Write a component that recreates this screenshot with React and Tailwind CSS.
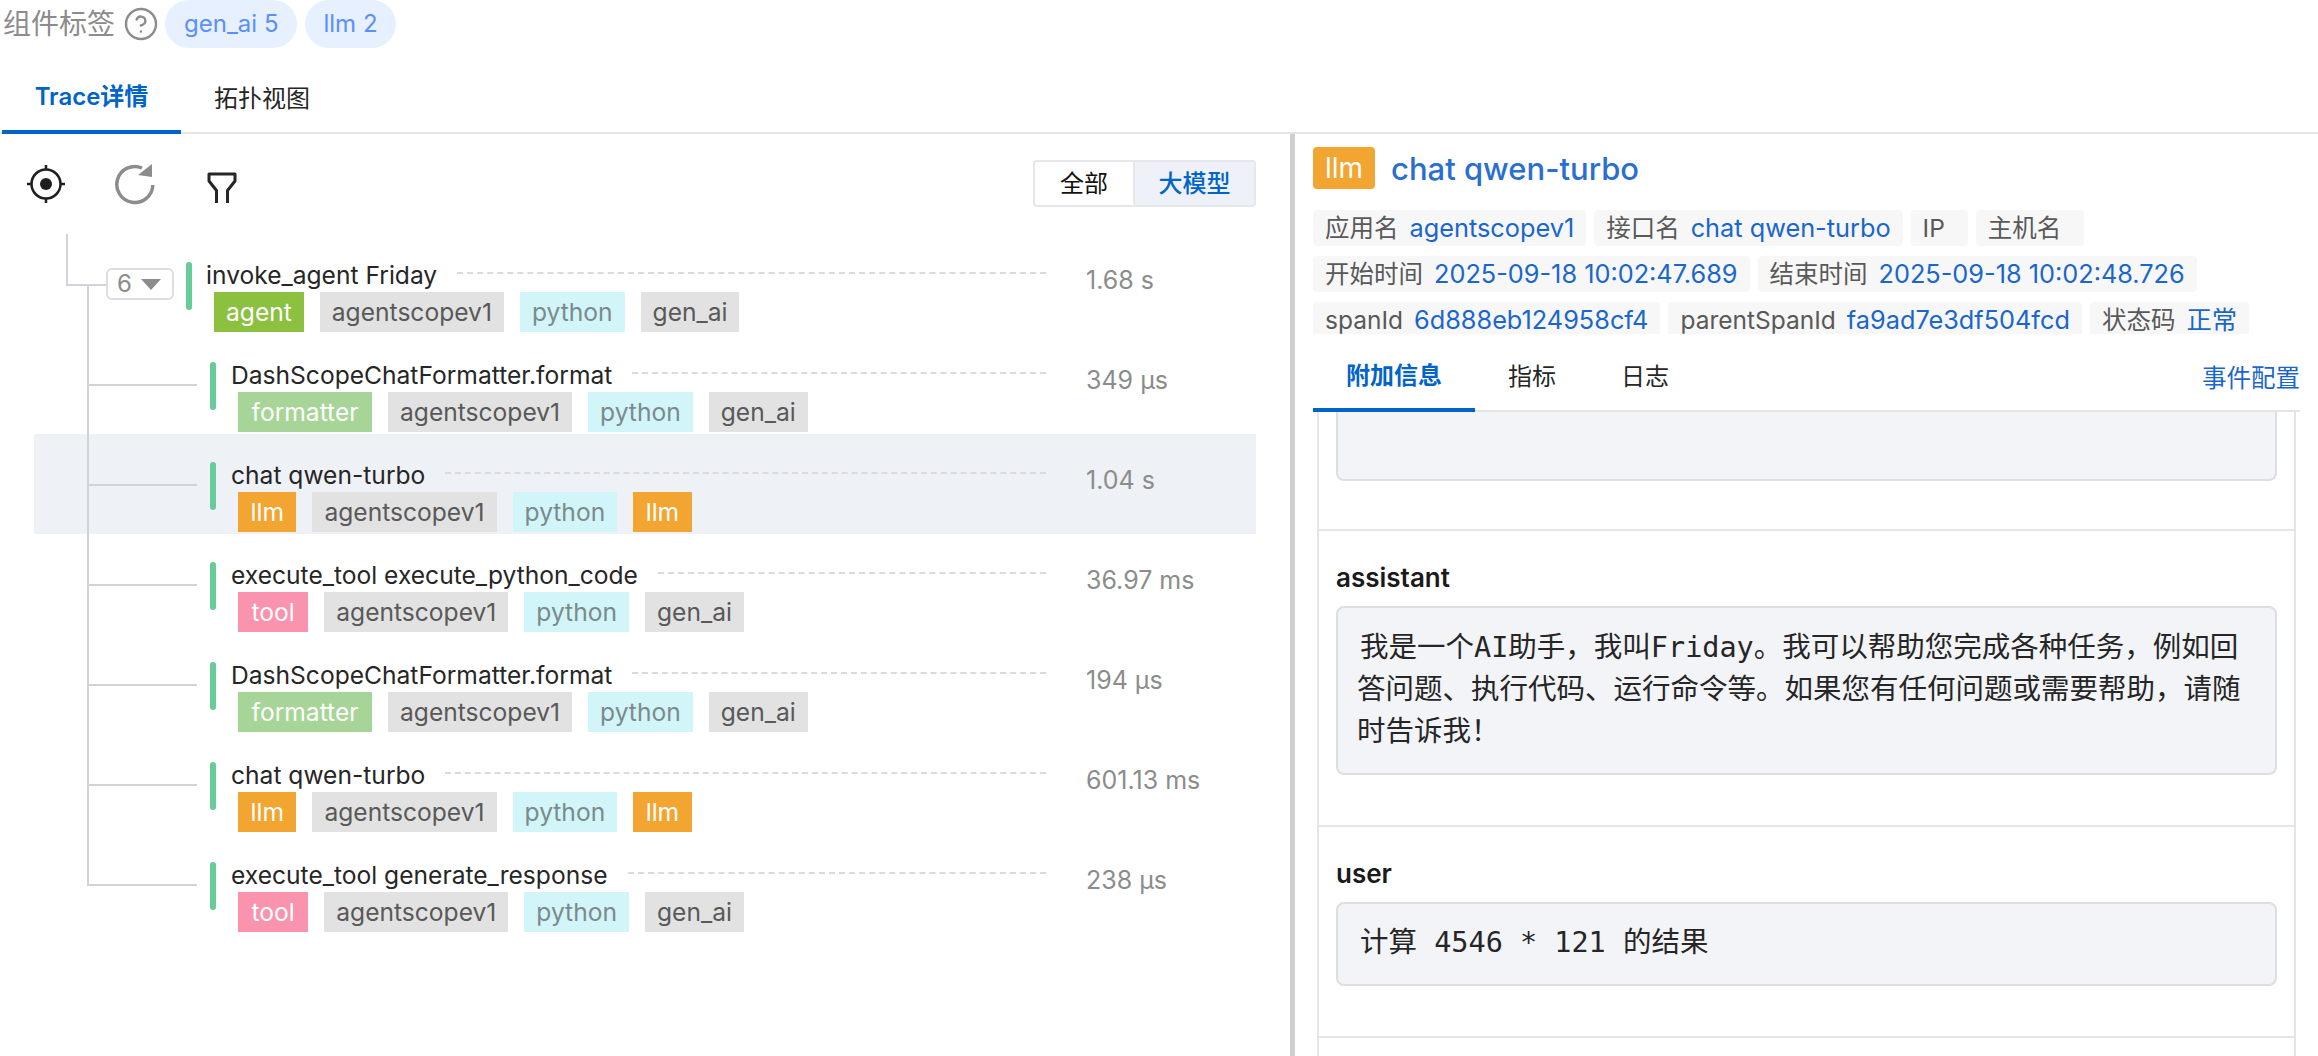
import React from "react";
import { CircleHelp } from "lucide-react";

const sans = 'font-["Inter","Noto_Sans_CJK_SC",sans-serif]';

const TAG = {
  agent: "px-3 bg-[#8cc03f] text-white",
  llm: "px-[12.5px] bg-[#f2a531] text-white",
  tool: "px-[13.5px] bg-[#fa94ae] text-white",
  formatter: "px-[13.5px] bg-[#a7d597] text-white",
  agentscopev1: "px-3 bg-[#e2e2e2] text-[#595959]",
  python: "px-3 bg-[#d2f5f9] text-[#7b8a8c]",
  gen_ai: "px-3 bg-[#e2e2e2] text-[#595959]",
};

function Tag({ name }) {
  return <span className={`h-10 flex items-center text-[24.6px] leading-none ${TAG[name]}`}>{name}</span>;
}

const rows = [
  { title: "invoke_agent Friday", time: "1.68 s", tags: ["agent", "agentscopev1", "python", "gen_ai"], root: true },
  { title: "DashScopeChatFormatter.format", time: "349 µs", tags: ["formatter", "agentscopev1", "python", "gen_ai"] },
  { title: "chat qwen-turbo", time: "1.04 s", tags: ["llm", "agentscopev1", "python", "llm"], active: true },
  { title: "execute_tool execute_python_code", time: "36.97 ms", tags: ["tool", "agentscopev1", "python", "gen_ai"] },
  { title: "DashScopeChatFormatter.format", time: "194 µs", tags: ["formatter", "agentscopev1", "python", "gen_ai"] },
  { title: "chat qwen-turbo", time: "601.13 ms", tags: ["llm", "agentscopev1", "python", "llm"] },
  { title: "execute_tool generate_response", time: "238 µs", tags: ["tool", "agentscopev1", "python", "gen_ai"], last: true },
];

function Row({ r }) {
  return (
    <div className={`relative flex h-[100px] ${r.root ? "pl-[152px]" : "pl-[176px]"} ${r.active ? "bg-[#eef1f6]" : ""}`}>
      {r.root ? (
        <>
          <div className="absolute left-[32px] top-0 h-[52px] w-[40px] border-l-2 border-b-2 border-[#d0d3d9]" />
          <div className="absolute left-[53px] top-[51px] bottom-0 w-[2px] bg-[#d0d3d9]" />
          <div className="absolute left-[72px] top-[34px] w-[68px] h-[32px] bg-white border-2 border-[#dcdee2] rounded-[6px] flex items-center pl-[9px] gap-[9px] text-[24px] leading-none text-[#8c8c8c]">
            6
            <svg width="20" height="11" viewBox="0 0 20 11"><path d="M0 0H20L10 11Z" fill="#8c8c8c" /></svg>
          </div>
        </>
      ) : (
        <>
          <div className="absolute left-[53px] top-0 h-[52px] w-[110px] border-l-2 border-b-2 border-[#d0d3d9]" />
          {!r.last && <div className="absolute left-[53px] top-[51px] bottom-0 w-[2px] bg-[#d0d3d9]" />}
        </>
      )}
      <div className="w-[6px] h-[48px] mt-[28px] rounded-full bg-[#66cc99] shrink-0" />
      <div className={`flex-1 min-w-0 ${r.root ? "ml-[14px]" : "ml-[15px]"} pt-[24px]`}>
        <div className="flex items-center h-[34px]">
          <span className="text-[24.6px] leading-none text-[#262626] whitespace-nowrap">{r.title}</span>
          <div className="flex-1 ml-[20px] mb-[4px] border-t-2 border-dashed border-[#d9dbe0]" />
        </div>
        <div className={`flex gap-4 ${r.root ? "ml-[8px]" : "ml-[7px]"}`}>
          {r.tags.map((t, i) => <Tag key={i} name={t} />)}
        </div>
      </div>
      <div className="w-[170px] ml-[40px] shrink-0 pt-[31px] text-[25px] leading-[30px] text-[#8c8c8c]">{r.time}</div>
    </div>
  );
}

function Chip({ k, v }) {
  return (
    <span className="h-[36px] px-3 flex items-center gap-[11px] rounded-[4px] bg-[#f7f7f7] text-[24.5px] leading-none text-[#595959] whitespace-nowrap">
      {k}
      <span className="text-[25.3px] text-[#1a66cc]">{v}</span>
    </span>
  );
}

const monoCls = 'font-["DejaVu_Sans_Mono","Noto_Sans_CJK_SC",monospace] text-[28.5px] leading-[42px] text-[#262626]';

export default function App() {
  return (
    <div className={`w-[2318px] h-[1056px] overflow-hidden bg-white flex flex-col ${sans}`}>
      <div className="h-[48px] shrink-0 flex items-center pl-[3px]">
        <span className="text-[28px] leading-none text-[#8c8c8c]">组件标签</span>
        <CircleHelp className="ml-[8px] text-[#8c8c8c]" size={36} strokeWidth={1.6} />
        <span className="ml-[6px] h-[48px] px-[19px] rounded-full bg-[#e6f0ff] text-[#5b8ff9] text-[24px] flex items-center">gen_ai 5</span>
        <span className="ml-[8px] h-[48px] px-[18px] rounded-full bg-[#e6f0ff] text-[#5b8ff9] text-[24px] flex items-center">llm 2</span>
      </div>

      <div className="h-[86px] shrink-0 flex border-b-2 border-[#e5e5e5] pl-[2px] text-[24px]">
        <div className="w-[179px] h-[86px] border-b-4 border-[#0064c8] flex items-center justify-center pt-[16px] font-semibold text-[#0064c8]">Trace详情</div>
        <div className="ml-[33px] h-[86px] flex items-center pt-[16px] text-[#262626]">拓扑视图</div>
      </div>

      <div className="flex-1 min-h-0 flex">
        <div className="w-[1290px] shrink-0 flex flex-col">
          <div className="h-[100px] shrink-0 flex items-start pl-[27px] pr-[34px]">
            <svg className="mt-[31px]" width="38" height="38" viewBox="0 0 38 38" fill="none" stroke="#1f1f1f">
              <circle cx="19" cy="19" r="14.5" strokeWidth="2.5" />
              <circle cx="19" cy="19" r="6" fill="#1f1f1f" stroke="none" />
              <path d="M19 0V5M19 33V38M0 19H5M33 19H38" strokeWidth="2.5" />
            </svg>
            <svg className="ml-[49px] mt-[29px]" width="42" height="42" viewBox="0 0 42 42" fill="none">
              <path d="M28 5A18 18 0 1 0 38.8 22" stroke="#8c8c8c" strokeWidth="3.5" />
              <path d="M38 1V14L24 12Z" fill="#8c8c8c" />
            </svg>
            <svg className="ml-[51px] mt-[38px]" width="30" height="32" viewBox="0 0 30 32" fill="none" stroke="#262626" strokeWidth="3" strokeLinejoin="round">
              <path d="M9.5 31V18.5L2 9V2H28V9L20.5 18.5V31" />
            </svg>
            <div className="ml-auto mt-[26px] h-[47px] flex rounded-[4px] border-2 border-[#e5e7eb] text-[24px] leading-none">
              <div className="w-[98px] flex items-center justify-center text-[#111]">全部</div>
              <div className="w-[121px] flex items-center justify-center border-l-2 border-[#e5e7eb] bg-[#eef2f8] font-medium text-[#0064c8]">大模型</div>
            </div>
          </div>
          <div className="ml-[34px] w-[1222px]">
            {rows.map((r, i) => <Row key={i} r={r} />)}
          </div>
        </div>

        <div className="w-[5px] shrink-0 bg-[#cfcfcf]" />

        <div className="flex-1 min-w-0 flex flex-col pl-[18px] pr-[18px]">
          <div className="flex items-center mt-[13px] h-[42px] shrink-0">
            <span className="w-[62px] h-[42px] rounded-[4px] bg-[#f2a531] text-white text-[28px] leading-none flex items-center justify-center">llm</span>
            <span className="ml-[16px] text-[31px] leading-none font-medium text-[#2a6fd0]">chat qwen-turbo</span>
          </div>
          <div className="mt-[21px] h-[124px] shrink-0 overflow-hidden flex flex-col gap-[10px]">
            <div className="flex gap-2"><Chip k="应用名" v="agentscopev1" /><Chip k="接口名" v="chat qwen-turbo" /><Chip k="IP" /><Chip k="主机名" /></div>
            <div className="flex gap-2"><Chip k="开始时间" v="2025-09-18 10:02:47.689" /><Chip k="结束时间" v="2025-09-18 10:02:48.726" /></div>
            <div className="flex gap-2"><Chip k="spanId" v="6d888eb124958cf4" /><Chip k="parentSpanId" v="fa9ad7e3df504fcd" /><Chip k="状态码" v="正常" /></div>
          </div>
          <div className="h-[78px] shrink-0 flex items-stretch border-b-2 border-[#e5e5e5] text-[24px] leading-none">
            <div className="w-[162px] h-[78px] border-b-4 border-[#0064c8] flex items-center justify-center pt-[10px] font-semibold text-[#0064c8]">附加信息</div>
            <div className="ml-[33px] h-[78px] flex items-center pt-[8px] text-[#262626]">指标</div>
            <div className="ml-[65px] h-[78px] flex items-center pt-[8px] text-[#262626]">日志</div>
            <div className="ml-auto h-[78px] flex items-center pt-[10px] text-[24.5px] text-[#1a66cc]">事件配置</div>
          </div>
          <div className="flex-1 min-h-0 overflow-hidden ml-[4px] w-[979px] border-x-2 border-[#e5e5e5]">
            <div className="px-[17px] pb-[48px] border-b-2 border-[#e5e5e5]">
              <div className="h-[69px] bg-[#f3f4f8] border-2 border-t-0 border-[#dcdee2] rounded-b-[8px]" />
            </div>
            <div className="px-[17px] pt-[29px] pb-[50px] border-b-2 border-[#e5e5e5]">
              <div className="text-[26px] leading-[36px] font-semibold text-[#1a1a1a]">assistant</div>
              <div className={`mt-[10px] h-[169px] bg-[#f3f4f8] border-2 border-[#dcdee2] rounded-[8px] pl-[19px] pr-[22px] pt-[19px] indent-[3px] ${monoCls}`}>
                我是一个AI助手，我叫Friday。我可以帮助您完成各种任务，例如回答问题、执行代码、运行命令等。如果您有任何问题或需要帮助，请随时告诉我！
              </div>
            </div>
            <div className="px-[17px] pt-[29px] pb-[50px] border-b-2 border-[#e5e5e5]">
              <div className="text-[26px] leading-[36px] font-semibold text-[#1a1a1a]">user</div>
              <div className={`mt-[10px] h-[84px] bg-[#f3f4f8] border-2 border-[#dcdee2] rounded-[8px] px-[22px] pt-[18px] ${monoCls}`}>
                计算 4546 * 121 的结果
              </div>
            </div>
          </div>
        </div>
      </div>
    </div>
  );
}
